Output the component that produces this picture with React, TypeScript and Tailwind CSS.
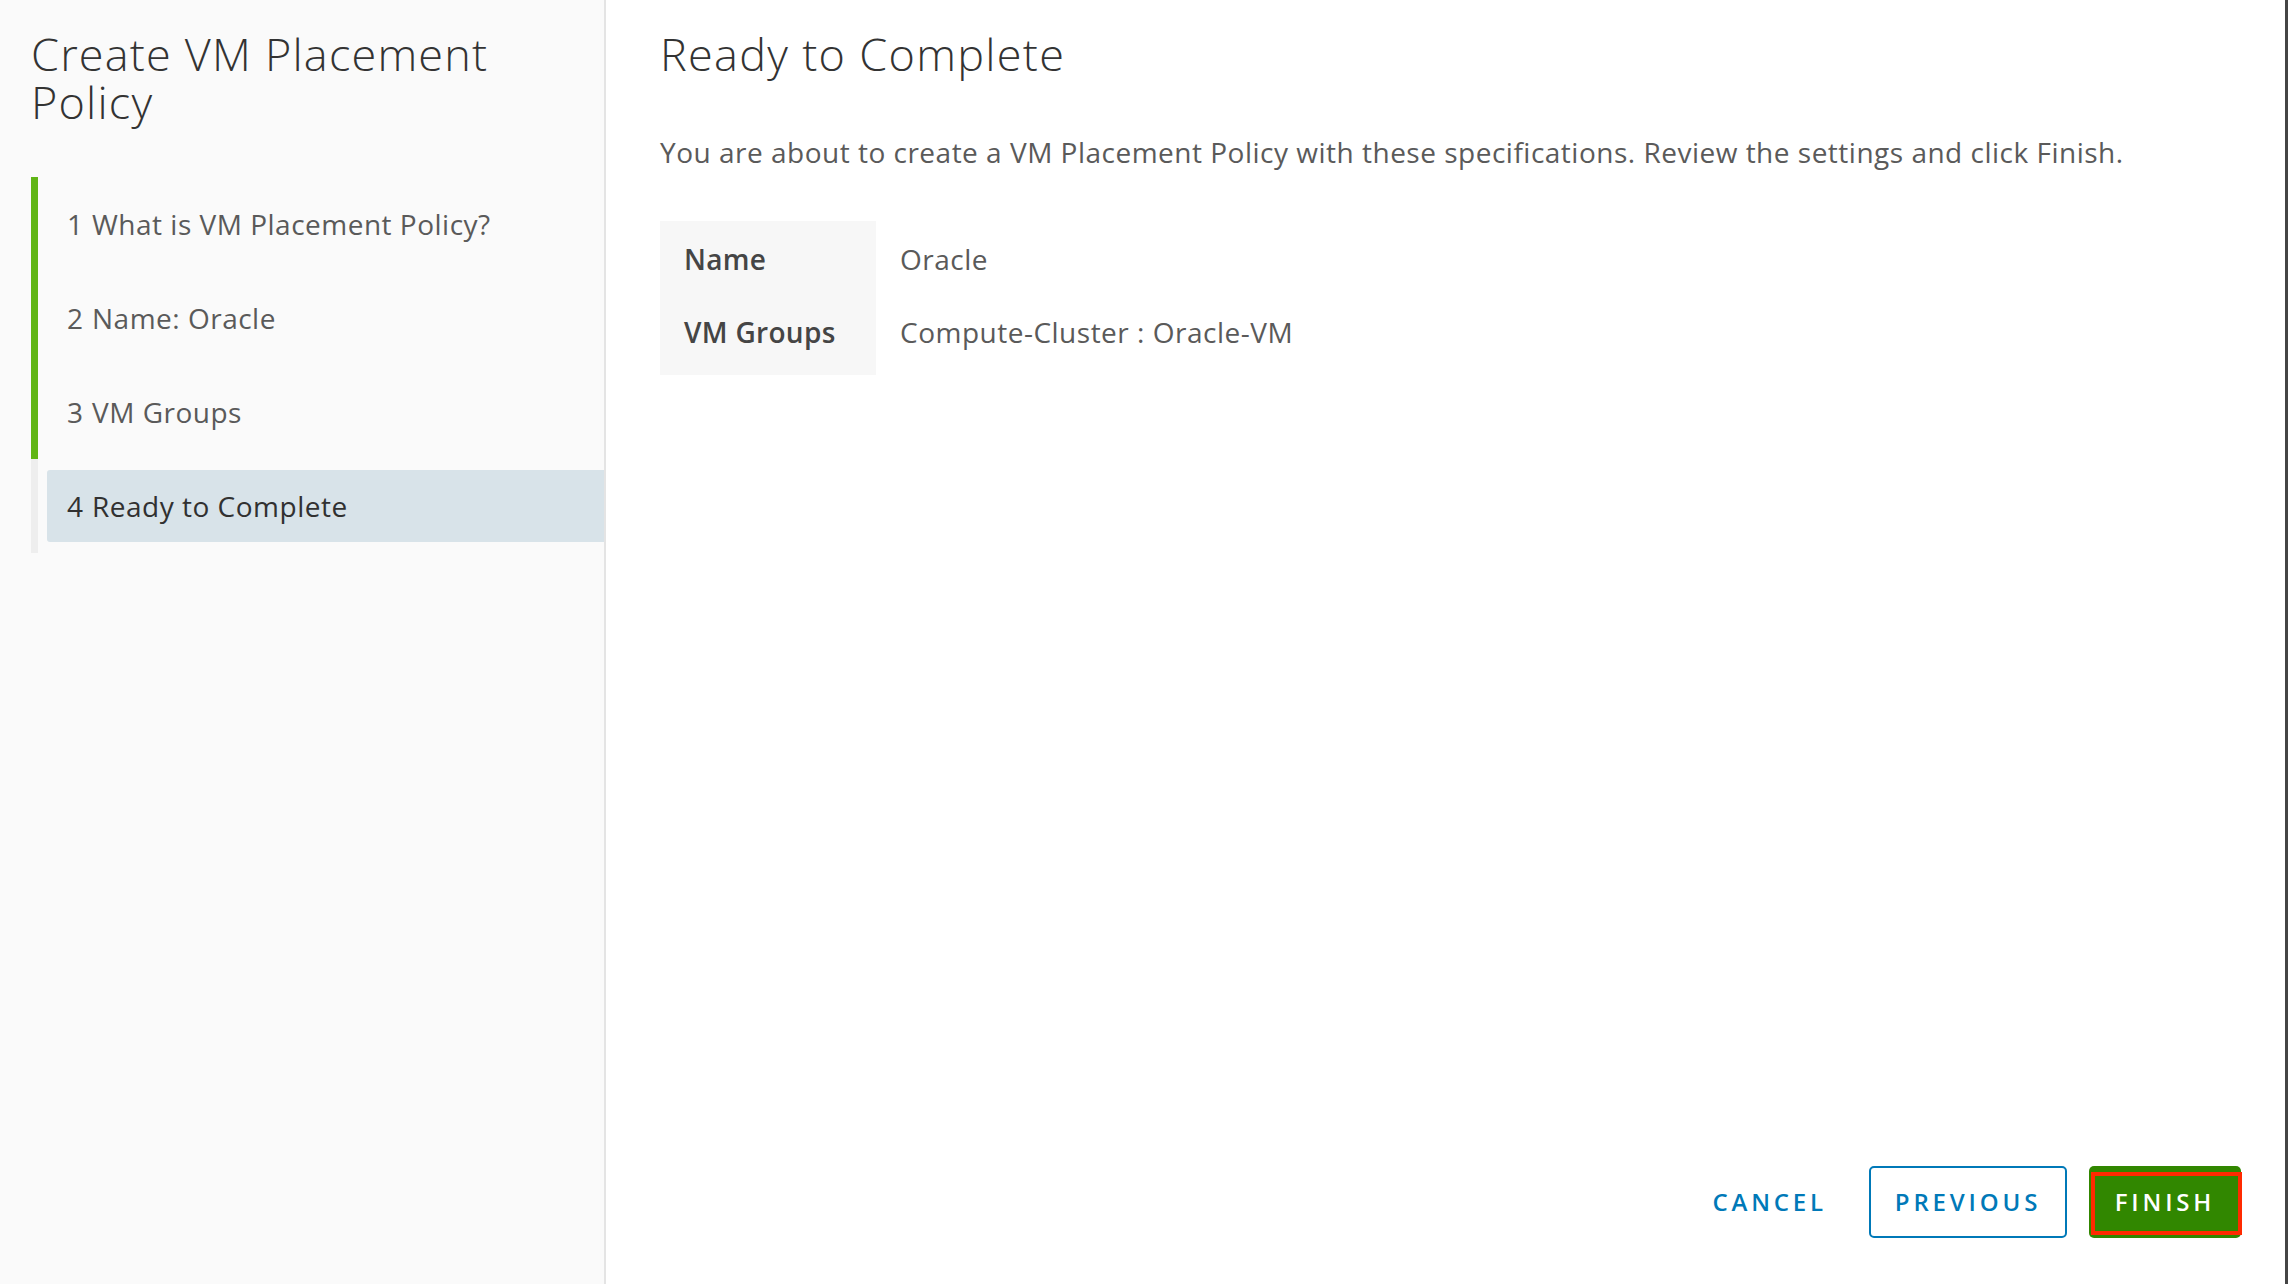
import React from 'react'

const steps = [
  { n: 1, label: 'What is VM Placement Policy?', done: true },
  { n: 2, label: 'Name: Oracle', done: true },
  { n: 3, label: 'VM Groups', done: true },
  { n: 4, label: 'Ready to Complete', done: false, active: true },
]

const specs = [
  { label: 'Name', value: 'Oracle' },
  { label: 'VM Groups', value: 'Compute-Cluster : Oracle-VM' },
]

export default function App() {
  return (
    <div
      className="flex h-screen w-full overflow-hidden bg-white text-[#565656]"
      style={{ fontFamily: '"Open Sans", Lato, sans-serif' }}
    >
      {/* Wizard nav */}
      <aside className="w-[606px] shrink-0 bg-[#fafafa] border-r-2 border-[#e4e4e4] pt-[30px]">
        <h1 className="pl-[31px] pr-[20px] text-[45px] leading-[48px] tracking-[1.2px] font-light text-[#333]">
          Create VM Placement Policy
        </h1>

        <ul className="mt-[51px] ml-[31px]">
          {steps.map((s) => (
            <li
              key={s.n}
              className={`h-[94px] border-l-[7px] py-[11px] pl-[9px] ${s.done ? 'border-[#60b515]' : 'border-[#eeeeee]'}`}
            >
              <div
                className={`flex h-[72px] items-center pl-[20px] rounded-l-[3px] text-[28px] tracking-[0.5px] ${s.active ? 'bg-[#d8e3e9] text-[#313131]' : 'text-[#5a5a5a]'}`}
              >
                <span className="w-[15px]">{s.n}</span>
                <span className="ml-[10px]">{s.label}</span>
              </div>
            </li>
          ))}
        </ul>
      </aside>

      {/* Page content */}
      <main className="flex flex-1 flex-col border-r-[3px] border-[#454545] pl-[54px] pr-[44px] pt-[30px] pb-[46px]">
        <h2 className="text-[45px] leading-[48px] tracking-[1.3px] font-light text-[#333]">Ready to Complete</h2>
        <p className="mt-[53px] text-[28px] tracking-[0.5px] text-[#5a5a5a]">
          You are about to create a VM Placement Policy with these specifications. Review the settings and click Finish.
        </p>

        <div className="mt-[48px] flex">
          <div className="bg-[#f7f7f7] w-[216px] pt-[19px] pb-[25px] pl-[24px]">
            {specs.map((r) => (
              <div key={r.label} className="h-[37px] flex items-center text-[28px] tracking-[0.3px] font-semibold text-[#454545] first:mb-[36px]">
                {r.label}
              </div>
            ))}
          </div>
          <div className="pt-[19px] pb-[25px] pl-[24px]">
            {specs.map((r) => (
              <div key={r.label} className="h-[37px] flex items-center text-[28px] tracking-[0.5px] text-[#5a5a5a] first:mb-[36px]">
                {r.value}
              </div>
            ))}
          </div>
        </div>

        <div className="mt-auto flex items-center justify-end gap-[22px]">
          <button className="h-[72px] px-[20px] text-[24px] font-semibold tracking-[0.16em] text-[#0079b8]">
            CANCEL
          </button>
          <button className="h-[72px] w-[198px] rounded-[5px] border-2 border-[#0079b8] text-[24px] font-semibold tracking-[0.16em] text-[#0079b8]">
            PREVIOUS
          </button>
          <div className="relative">
            <button className="h-[72px] w-[152px] rounded-[5px] bg-[#318700] text-[24px] font-semibold tracking-[0.16em] text-white">
              FINISH
            </button>
            <span className="pointer-events-none absolute left-[2px] right-[-1px] top-[6px] bottom-[3px] border-[4px] border-[#ff2a00]" />
          </div>
        </div>
      </main>
    </div>
  )
}
